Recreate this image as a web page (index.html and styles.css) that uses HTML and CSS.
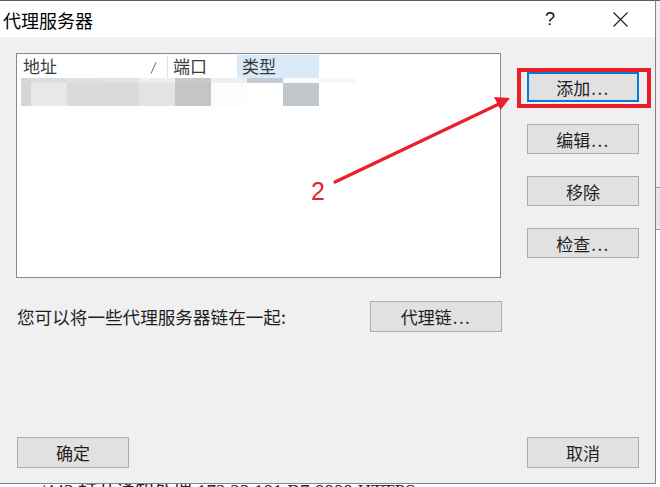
FILE: index.html
```html
<!DOCTYPE html>
<html lang="zh-CN">
<head>
<meta charset="utf-8">
<title>代理服务器</title>
<link rel="stylesheet" href="styles.css">
</head>
<body>
<div class="screen">
  <div class="top">
    <div class="dialog">
      <div class="titlebar">
        <span class="title">代理服务器</span>
        <span class="help">?</span>
        <svg class="close" width="15" height="15" viewBox="0 0 15 15"><path d="M0.5 0.5 L14.5 14.5 M14.5 0.5 L0.5 14.5" stroke="#1a1a1a" stroke-width="1.1" fill="none"/></svg>
      </div>
      <div class="body">
        <div class="toprow">
          <div class="listbox">
            <div class="lv-header">
              <div class="col col-addr"><span>地址</span>
                <svg class="sort" width="7" height="12" viewBox="0 0 7 12"><path d="M6 0.5 L1 11.5" stroke="#666" stroke-width="1" fill="none"/></svg>
              </div>
              <div class="col col-port"><span>端口</span></div>
              <div class="col col-type"><span>类型</span></div>
            </div>
            <div class="lv-row">
              <div class="px c0"></div><div class="px c1"></div><div class="px c2"></div><div class="px c3"></div><div class="px c4"></div><div class="px c5"></div><div class="px c6"></div><div class="px c7"></div><div class="px c8"></div><div class="px c9"></div>
            </div>
          </div>
          <div class="sidebtns">
            <button class="btn side focused">添加<span class="dots">...</span></button>
            <button class="btn side">编辑<span class="dots">...</span></button>
            <button class="btn side">移除</button>
            <button class="btn side">检查<span class="dots">...</span></button>
          </div>
        </div>
        <div class="chainrow">
          <span class="chaintext">您可以将一些代理服务器链在一起:</span>
          <button class="btn chain">代理链<span class="dots">...</span></button>
        </div>
        <div class="bottomrow">
          <button class="btn foot">确定</button>
          <button class="btn foot">取消</button>
        </div>
      </div>
    </div>
    <div class="behind-right">
      <div class="br-a"></div>
      <div class="br-line"></div>
      <div class="br-b"></div>
      <div class="br-line"></div>
      <div class="br-c"></div>
    </div>
  </div>
  <div class="behind-bottom">com/443 打开通知处理 172.23.181.B7:8888 HTTPS</div>

  <div class="annot-box"></div>
  <svg class="annot-arrow" width="660" height="487" viewBox="0 0 660 487">
    <line x1="335" y1="182" x2="499" y2="104" stroke="#ea1f29" stroke-width="3.2" stroke-linecap="round"/>
    <polygon points="510,98 500.5,110 494,97" fill="#ea1f29"/>
  </svg>
  <div class="annot-num">2</div>
</div>
</body>
</html>
```
FILE: styles.css
```css
* { box-sizing: border-box; }
html, body { margin: 0; padding: 0; }
body {
  width: 660px;
  height: 487px;
  overflow: hidden;
  background: #ffffff;
  font-family: "Noto Sans CJK SC", "Noto Sans", sans-serif;
  color: #1e1e1e;
}
.screen {
  position: relative;
  width: 660px;
  height: 487px;
  overflow: hidden;
}
.top {
  display: flex;
  height: 484px;
}
.dialog {
  width: 656px;
  height: 484px;
  border-top: 1px solid #5c5c5c;
  border-right: 1px solid #858585;
  border-bottom: 1px solid #858585;
  display: flex;
  flex-direction: column;
  background: #f0f0f0;
}
.titlebar {
  height: 36px;
  background: #ffffff;
  display: flex;
  align-items: center;
  padding: 0 27px 0 3px;
}
.title {
  font-size: 18px;
  line-height: 36px;
  color: #000;
  margin-top: 1px;
}
.help {
  margin-left: auto;
  font-family: "Liberation Sans", sans-serif;
  font-size: 18px;
  color: #111;
  line-height: 36px;
}
.close {
  margin-left: 58px;
  margin-top: 1px;
  display: block;
}
.body {
  flex: 1;
  display: flex;
  flex-direction: column;
  padding: 16px 16px 15px 16px;
}
.toprow {
  display: flex;
  align-items: flex-start;
}
.listbox {
  width: 486px;
  height: 225px;
  background: #fff;
  border: 1px solid #848890;
}
.lv-header {
  display: flex;
  height: 24px;
  font-size: 17px;
  color: #3a3a3a;
}
.col {
  display: flex;
  align-items: center;
  height: 23px;
  margin-top: 1px;
}
.col span { line-height: 23px; margin-top: -2px; }
.col-addr {
  width: 151px;
  padding-left: 6px;
  border-right: 1px solid #e3e3e3;
}
.sort { margin-left: auto; margin-right: 10px; display: block; margin-top: 2px; }
.col-port {
  width: 69px;
  padding-left: 5px;
}
.col-type {
  width: 82px;
  padding-left: 5px;
  background: #d9eaf8;
}
.lv-row {
  display: flex;
  margin-left: 4px;
  height: 28px;
}
.px {
  width: 36px;
  height: 28px;
  border-top: 5px solid;
}
.c0 { width: 10px; border-top-color: #d8d8d8; background: #d6d6d6; }
.c1 { border-top-color: #dddddd; background: #e8e8e8; }
.c2 { border-top-color: #e1e1e1; background: #dbdbdb; }
.c3 { border-top-color: #e3e3e3; background: #dadad9; }
.c4 { border-top-color: #eeeeee; background: #e3e3e3; }
.c5 { border-top-color: #c8c9c8; background: #c4c5c4; }
.c6 { border-top-color: #eeeff0; background: #fcfcfc; }
.c7 { border-top-color: #c3ccd4; background: #ffffff; }
.c8 { border-top-color: #fcfcfc; background: #c1c6cb; }
.c9 { border-top-color: #f7f7f7; background: #ffffff; }

.sidebtns {
  margin-left: 26px;
  padding-top: 19px;
  display: flex;
  flex-direction: column;
  gap: 22px;
}
.btn {
  font-family: "Noto Sans CJK SC", "Noto Sans", sans-serif;
  font-size: 17px;
  color: #1e1e1e;
  background: #e1e1e1;
  border: 1px solid #adadad;
  padding: 0;
  margin: 0;
  display: flex;
  align-items: center;
  justify-content: center;
  line-height: 1;
}
.dots { letter-spacing: 1.5px; margin-left: 1px; }
.side {
  width: 112px;
  height: 30px;
}
.focused {
  border: 2px solid #0a78d7;
}
.chainrow {
  display: flex;
  align-items: center;
  margin-top: 23px;
  padding-left: 1px;
}
.chaintext {
  font-size: 17.6px;
  color: #1e1e1e;
  width: 353px;
  white-space: nowrap;
}
.chain {
  width: 132px;
  height: 31px;
}
.bottomrow {
  margin-top: auto;
  display: flex;
  justify-content: space-between;
  padding-left: 1px;
}
.foot {
  width: 112px;
  height: 31px;
}
.behind-right {
  width: 4px;
  display: flex;
  flex-direction: column;
  border-top: 1px solid #5c5c5c;
}
.br-a { height: 186px; background: #f0f0f0; }
.br-line { height: 1px; background: #9a9a9a; }
.br-b { height: 41px; background: #e6e6e6; }
.br-c { flex: 1; background: #ffffff; }
.behind-bottom {
  height: 3px;
  overflow: hidden;
  font-family: "Liberation Serif", serif;
  font-size: 19px;
  line-height: 16px;
  padding-left: 7px;
  color: #222;
  white-space: nowrap;
}
.annot-box {
  position: absolute;
  left: 517px;
  top: 68px;
  width: 134px;
  height: 40px;
  border: 4px solid #ea1f29;
}
.annot-arrow {
  position: absolute;
  left: 0;
  top: 0;
  pointer-events: none;
}
.annot-num {
  position: absolute;
  left: 311px;
  top: 179px;
  font-family: "Liberation Sans", sans-serif;
  font-size: 25px;
  line-height: 25px;
  color: #ea1f29;
}
```
